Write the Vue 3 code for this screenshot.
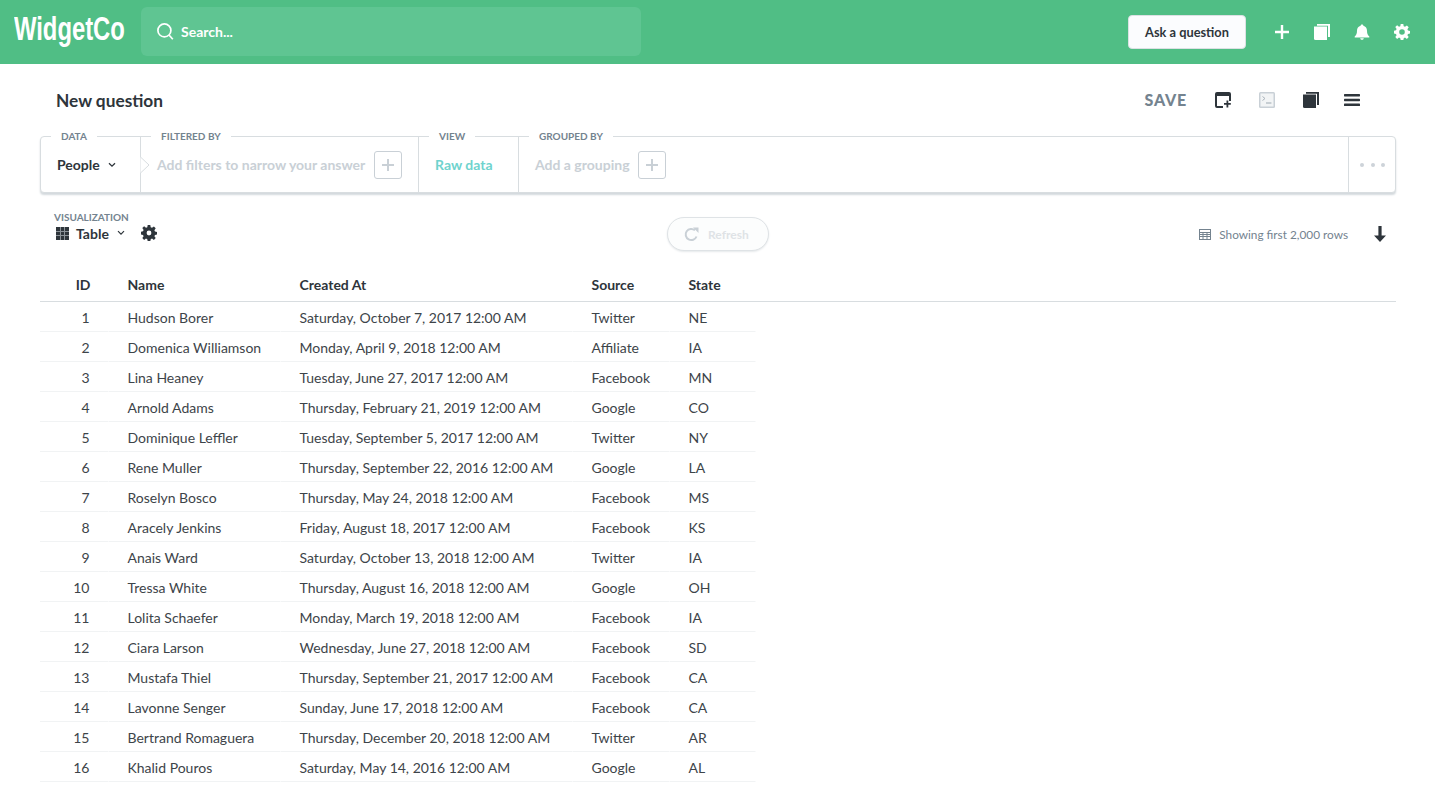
<template>
  <div class="page">
    <header class="navbar">
      <div class="logo">WidgetCo</div>
      <div class="search">
        <svg width="18" height="18" viewBox="0 0 18 18" fill="none" stroke="#fff" stroke-width="1.7">
          <circle cx="7.400" cy="7.400" r="6.500" />
          <path d="M12 12 15.800 16.200" />
        </svg>
        <span>Search...</span>
      </div>
      <div class="nav-right">
        <button class="ask">Ask a question</button>
        <svg class="nav-icon" width="16" height="16" viewBox="0 0 16 16" fill="#fff">
          <path d="M6.800 1h2.400v5.800H15v2.400H9.200V15H6.800V9.200H1V6.800h5.800z" />
        </svg>
        <svg class="nav-icon" width="16" height="16" viewBox="0 0 16 16" fill="#fff">
          <path d="M0 2.600h13V16H1.500A1.500 1.500 0 0 1 0 14.500z" />
          <path d="M3 0h13v13h-2V1.800H3z" />
        </svg>
        <svg class="nav-icon" width="16" height="16" viewBox="0 0 16 16" fill="#fff">
          <path d="M8 .5c.8 0 1.300.5 1.400 1.300C11.700 2.400 13 4.300 13 6.800c0 3 .8 4.500 2.300 5.700v1H.7v-1C2.200 11.300 3 9.800 3 6.800c0-2.500 1.300-4.400 3.600-5C6.700 1 7.200.5 8 .5zM6.200 14.300h3.600C9.600 15.300 8.900 15.800 8 15.800s-1.600-.5-1.800-1.500z" />
        </svg>
        <svg class="nav-icon" width="16" height="16" viewBox="0 0 16 16" fill="#fff">
          <path fill-rule="evenodd" d="M6.700 0h2.600l.4 2.200 1.300.6 1.900-1.300 1.800 1.800-1.300 1.900.6 1.300 2 .4v2.600l-2 .4-.6 1.300 1.300 1.900-1.800 1.800-1.900-1.300-1.300.6-.4 2H6.700l-.4-2-1.300-.6-1.900 1.300-1.800-1.800 1.300-1.900-.6-1.300-2-.4V6.700l2-.4.6-1.300-1.300-1.900 1.800-1.800L5 2.800l1.300-.6zM8 5.200a2.800 2.800 0 1 0 0 5.600 2.800 2.800 0 0 0 0-5.600z" />
        </svg>
      </div>
    </header>

    <section class="title-row">
      <h1>New question</h1>
      <div class="title-actions">
        <span class="save">SAVE</span>
        <svg width="16" height="16" viewBox="0 0 16 16" fill="#2e353b">
          <path d="M2 0h12a2 2 0 0 1 2 2v7h-2V4H2v10h6v2H2a2 2 0 0 1-2-2V2a2 2 0 0 1 2-2z" />
          <path d="M11.500 8.500h1.800v2.400h2.500v1.800h-2.500V15.500h-1.800v-2.800H9v-1.800h2.500z" />
        </svg>
        <svg width="16" height="16" viewBox="0 0 16 16">
          <rect x="0" y="0" width="16" height="16" rx="1.500" fill="#c9d0d6" />
          <rect x="1.500" y="1.500" width="13" height="13" fill="#f2f4f5" />
          <path d="M3.500 4.500 6 6.500 3.500 8.500" fill="none" stroke="#aab4bc" stroke-width="1" />
          <path d="M7 11h5.500" stroke="#aab4bc" stroke-width="1.200" />
        </svg>
        <svg width="16" height="16" viewBox="0 0 16 16" fill="#2e353b">
          <path d="M0 2.600h13V16H1.500A1.500 1.500 0 0 1 0 14.500z" />
          <path d="M3 0h13v13h-2V1.800H3z" />
        </svg>
        <svg class="menu-icon" width="16" height="14" viewBox="0 0 16 14" fill="#2e353b">
          <rect y="1" width="16" height="2.400" rx="0.600" />
          <rect y="5.800" width="16" height="2.400" rx="0.600" />
          <rect y="10.600" width="16" height="2.400" rx="0.600" />
        </svg>
      </div>
    </section>

    <section class="gui">
      <div class="gui-cell data">
        <span class="legend">DATA</span>
        <span class="people">People</span>
        <svg class="chev" width="8" height="6" viewBox="0 0 8 6" fill="none" stroke="#2e353b" stroke-width="1.300"><path d="M1 1.200 4 4.200 7 1.200" /></svg>
      </div>
      <div class="gui-cell filter">
        <span class="legend">FILTERED BY</span>
        <svg class="arrow" width="10" height="16" viewBox="0 0 10 16" fill="#fff" stroke="#d8dde0"><path d="M.5 0 9 8 .5 16" /></svg>
        <span class="placeholder">Add filters to narrow your answer</span>
        <span class="plus"></span>
      </div>
      <div class="gui-cell view">
        <span class="legend">VIEW</span>
        <span class="raw">Raw data</span>
      </div>
      <div class="gui-cell group">
        <span class="legend">GROUPED BY</span>
        <span class="placeholder">Add a grouping</span>
        <span class="plus"></span>
      </div>
      <div class="gui-cell more">
        <i></i><i></i><i></i>
      </div>
    </section>

    <section class="viz-row">
      <div class="viz">
        <div class="viz-label">VISUALIZATION</div>
        <div class="viz-select">
          <svg width="13" height="13" viewBox="0 0 13 13" fill="#2e353b">
            <path d="M0 0h13v13H0z" />
            <path d="M4 0h1v13H4zM8 0h1v13H8zM0 4h13v1H0zM0 8h13v1H0z" fill="#8b9298" />
          </svg>
          <span>Table</span>
          <svg class="chev-small" width="8" height="6" viewBox="0 0 8 6" fill="none" stroke="#2e353b" stroke-width="1.200"><path d="M1 1.200 4 4.200 7 1.200" /></svg>
          <svg class="viz-gear" width="16" height="16" viewBox="0 0 16 16" fill="#2e353b">
            <path fill-rule="evenodd" d="M6.700 0h2.600l.4 2.200 1.300.6 1.900-1.300 1.800 1.800-1.300 1.900.6 1.300 2 .4v2.600l-2 .4-.6 1.300 1.300 1.900-1.800 1.800-1.900-1.300-1.300.6-.4 2H6.700l-.4-2-1.300-.6-1.900 1.300-1.800-1.800 1.300-1.900-.6-1.300-2-.4V6.700l2-.4.6-1.300-1.300-1.900 1.800-1.800L5 2.800l1.300-.6zM8 5.600a2.400 2.400 0 1 0 0 4.800 2.400 2.400 0 0 0 0-4.800z" />
          </svg>
        </div>
      </div>
      <button class="refresh">
        <svg width="15" height="15" viewBox="0 0 15 15" fill="none">
          <path d="M12.500 9.500A5.600 5.600 0 1 1 11 3.300" stroke="#c9d0d6" stroke-width="2" />
          <path d="M9 .5h5.500V6z" fill="#c9d0d6" />
        </svg>
        <span>Refresh</span>
      </button>
      <div class="viz-right">
        <svg width="12" height="11" viewBox="0 0 12 11" fill="none" stroke="#74838f" stroke-width="1">
          <rect x="0.500" y="0.500" width="11" height="10" />
          <path d="M0.500 3.500h11M0.500 5.500h11M0.500 7.500h11M4 3.500v7M8 3.500v7" />
        </svg>
        <span class="rows-note">Showing first 2,000 rows</span>
        <svg class="download" width="12" height="16" viewBox="0 0 12 16" fill="#2e353b">
          <path d="M4.400 0h3.200v9.600H12L6 16 0 9.600h4.400z" />
        </svg>
      </div>
    </section>

    <table class="results">
      <colgroup>
        <col class="c-id" />
        <col class="c-name" />
        <col class="c-created" />
        <col class="c-source" />
        <col class="c-state" />
        <col />
      </colgroup>
      <thead>
        <tr>
          <th class="num">ID</th>
          <th>Name</th>
          <th>Created At</th>
          <th>Source</th>
          <th>State</th>
          <th></th>
        </tr>
      </thead>
      <tbody>
        <tr v-for="row in rows" :key="row[0]">
          <td class="num">{{ row[0] }}</td>
          <td>{{ row[1] }}</td>
          <td>{{ row[2] }}</td>
          <td>{{ row[3] }}</td>
          <td>{{ row[4] }}</td>
          <td class="filler"></td>
        </tr>
      </tbody>
    </table>
  </div>
</template>

<script setup>
const rows = [
  [1, 'Hudson Borer', 'Saturday, October 7, 2017 12:00 AM', 'Twitter', 'NE'],
  [2, 'Domenica Williamson', 'Monday, April 9, 2018 12:00 AM', 'Affiliate', 'IA'],
  [3, 'Lina Heaney', 'Tuesday, June 27, 2017 12:00 AM', 'Facebook', 'MN'],
  [4, 'Arnold Adams', 'Thursday, February 21, 2019 12:00 AM', 'Google', 'CO'],
  [5, 'Dominique Leffler', 'Tuesday, September 5, 2017 12:00 AM', 'Twitter', 'NY'],
  [6, 'Rene Muller', 'Thursday, September 22, 2016 12:00 AM', 'Google', 'LA'],
  [7, 'Roselyn Bosco', 'Thursday, May 24, 2018 12:00 AM', 'Facebook', 'MS'],
  [8, 'Aracely Jenkins', 'Friday, August 18, 2017 12:00 AM', 'Facebook', 'KS'],
  [9, 'Anais Ward', 'Saturday, October 13, 2018 12:00 AM', 'Twitter', 'IA'],
  [10, 'Tressa White', 'Thursday, August 16, 2018 12:00 AM', 'Google', 'OH'],
  [11, 'Lolita Schaefer', 'Monday, March 19, 2018 12:00 AM', 'Facebook', 'IA'],
  [12, 'Ciara Larson', 'Wednesday, June 27, 2018 12:00 AM', 'Facebook', 'SD'],
  [13, 'Mustafa Thiel', 'Thursday, September 21, 2017 12:00 AM', 'Facebook', 'CA'],
  [14, 'Lavonne Senger', 'Sunday, June 17, 2018 12:00 AM', 'Facebook', 'CA'],
  [15, 'Bertrand Romaguera', 'Thursday, December 20, 2018 12:00 AM', 'Twitter', 'AR'],
  [16, 'Khalid Pouros', 'Saturday, May 14, 2016 12:00 AM', 'Google', 'AL']
]
</script>

<style>
html, body {
  margin: 0;
  background: #fff;
  overflow: hidden;
}
</style>

<style scoped>
.page {
  height: 798px;
  overflow: hidden;
  font-family: Lato, "Noto Sans", sans-serif;
  color: #2e353b;
}

.navbar {
  height: 64px;
  box-sizing: border-box;
  background: #50be85;
  display: flex;
  align-items: center;
  padding: 0 25px 0 14px;
}

.logo {
  width: 127px;
  flex: none;
  font-family: "Liberation Sans", sans-serif;
  font-size: 34px;
  font-weight: 700;
  color: #fff;
  line-height: 1;
  transform: scaleX(0.7);
  transform-origin: left center;
  white-space: nowrap;
  margin-top: -8px;
}

.search {
  width: 500px;
  height: 49px;
  margin-bottom: 1px;
  box-sizing: border-box;
  background: #5fc592;
  border-radius: 6px;
  display: flex;
  align-items: center;
  gap: 6px;
  padding: 0 16px;
  color: #fff;
  font-size: 14px;
  font-weight: 700;
}

.nav-right {
  margin-left: auto;
  display: flex;
  align-items: center;
}

.ask {
  width: 118px;
  height: 34px;
  box-sizing: border-box;
  background: #fbfcfe;
  border: 1px solid #dce1e4;
  border-radius: 4px;
  font-family: inherit;
  font-size: 12.800px;
  font-weight: 700;
  color: #2e353b;
  padding: 0;
  margin-right: 12px;
}

.nav-icon {
  margin-left: 24px;
}

.nav-right .nav-icon:first-of-type {
  margin-left: 16px;
}

.title-row {
  height: 72px;
  box-sizing: border-box;
  padding: 0 75px 1px 56px;
  display: flex;
  align-items: center;
  justify-content: space-between;
}

.title-row h1 {
  margin: 2px 0 0;
  font-size: 17.300px;
  font-weight: 700;
  color: #2e353b;
}

.title-actions {
  display: flex;
  align-items: center;
  gap: 28px;
}

.save {
  font-size: 16px;
  font-weight: 900;
  letter-spacing: 0.800px;
  color: #74838f;
}

.menu-icon {
  margin-left: -3px;
}

.gui {
  margin: 0 39px 0 40px;
  height: 57px;
  box-sizing: border-box;
  border: 1px solid #d8dde0;
  border-radius: 4px;
  box-shadow: 0 2px 2px #d3d9dd;
  display: flex;
  background: #fff;
}

.gui-cell {
  position: relative;
  display: flex;
  align-items: center;
  box-sizing: border-box;
  border-right: 1px solid #d8dde0;
  padding-left: 16px;
  font-size: 14px;
  font-weight: 700;
}

.data { width: 100px; }
.filter { width: 278px; }
.view { width: 100px; }
.group { flex: 1; }
.more {
  width: 46px;
  border-right: 0;
  padding: 0 0 0 11px;
  gap: 6.500px;
}

.more i {
  width: 4px;
  height: 4px;
  border-radius: 50%;
  background: #cdd3d9;
}

.legend {
  position: absolute;
  top: -7px;
  left: 10px;
  padding: 0 10px;
  background: #fff;
  font-size: 10px;
  line-height: 12px;
  font-weight: 700;
  color: #74838f;
  white-space: nowrap;
}

.chev {
  margin-left: 8px;
}

.people {
  color: #2e353b;
}

.arrow {
  position: absolute;
  left: -1px;
  top: 20px;
}

.placeholder {
  color: #c9d0d6;
  white-space: nowrap;
}

.plus {
  position: relative;
  flex: none;
  width: 28px;
  height: 28px;
  box-sizing: border-box;
  margin-left: 8px;
  border: 1px solid #c9d0d6;
  border-radius: 3px;
}

.filter .plus {
  margin-left: 9px;
}

.plus::before,
.plus::after {
  content: "";
  position: absolute;
  background: #c9d0d6;
}

.plus::before {
  left: 7px;
  top: 12px;
  width: 12px;
  height: 2px;
}

.plus::after {
  left: 12px;
  top: 7px;
  width: 2px;
  height: 12px;
}

.raw {
  color: #6fd3ce;
}

.viz-row {
  position: relative;
  height: 48px;
  margin: 24px 39px 0 54px;
  display: flex;
  align-items: flex-start;
  justify-content: space-between;
}

.viz-label {
  font-size: 10px;
  line-height: 12px;
  font-weight: 700;
  color: #74838f;
  margin-top: -6px;
}

.viz-select {
  display: flex;
  align-items: center;
  margin-left: 2px;
  height: 20px;
  font-size: 14px;
  font-weight: 700;
}

.viz-select span {
  margin-left: 7px;
}

.chev-small {
  margin-left: 8px;
}

.viz-gear {
  margin-left: 16px;
}

.refresh {
  position: absolute;
  left: 613px;
  top: 0;
  width: 102px;
  height: 34px;
  box-sizing: border-box;
  display: flex;
  align-items: center;
  gap: 9px;
  padding: 0 0 0 16px;
  background: #fcfdfd;
  border: 1px solid #dfe3e6;
  border-radius: 17px;
  box-shadow: 0 1px 2px #e6e9eb;
  font-family: inherit;
  font-size: 12px;
  font-weight: 700;
  color: #dfe3e6;
}

.viz-right {
  display: flex;
  align-items: center;
  height: 34px;
  font-size: 11.800px;
  font-weight: 400;
  color: #74838f;
}

.rows-note {
  margin-left: 8px;
}

.download {
  margin-left: 26px;
  margin-right: 10px;
}

.results {
  width: 1356px;
  margin-left: 40px;
  border-collapse: separate;
  border-spacing: 0;
  table-layout: fixed;
  font-size: 14px;
}

.c-id { width: 68.500px; }
.c-name { width: 172px; }
.c-created { width: 292px; }
.c-source { width: 97px; }
.c-state { width: 86.500px; }

.results th,
.results td {
  text-align: left;
  padding: 0 0 0 19px;
  box-sizing: border-box;
  white-space: nowrap;
}

.results th {
  height: 37px;
  padding-top: 3px;
  font-weight: 700;
  color: #2e353b;
  border-bottom: 1px solid #d8dde0;
}

.results td {
  height: 30px;
  padding-top: 1px;
  font-weight: 400;
  color: #3d4449;
  border-bottom: 1px solid #f1f3f4;
  border-right: 1px solid #fff;
}

.results td.filler {
  border-bottom: 0;
  border-right: 0;
}

.results td.num {
  text-align: right;
  padding: 1px 18px 0 0;
}

.results th.num {
  text-align: right;
  padding: 3px 18px 0 0;
}
</style>
